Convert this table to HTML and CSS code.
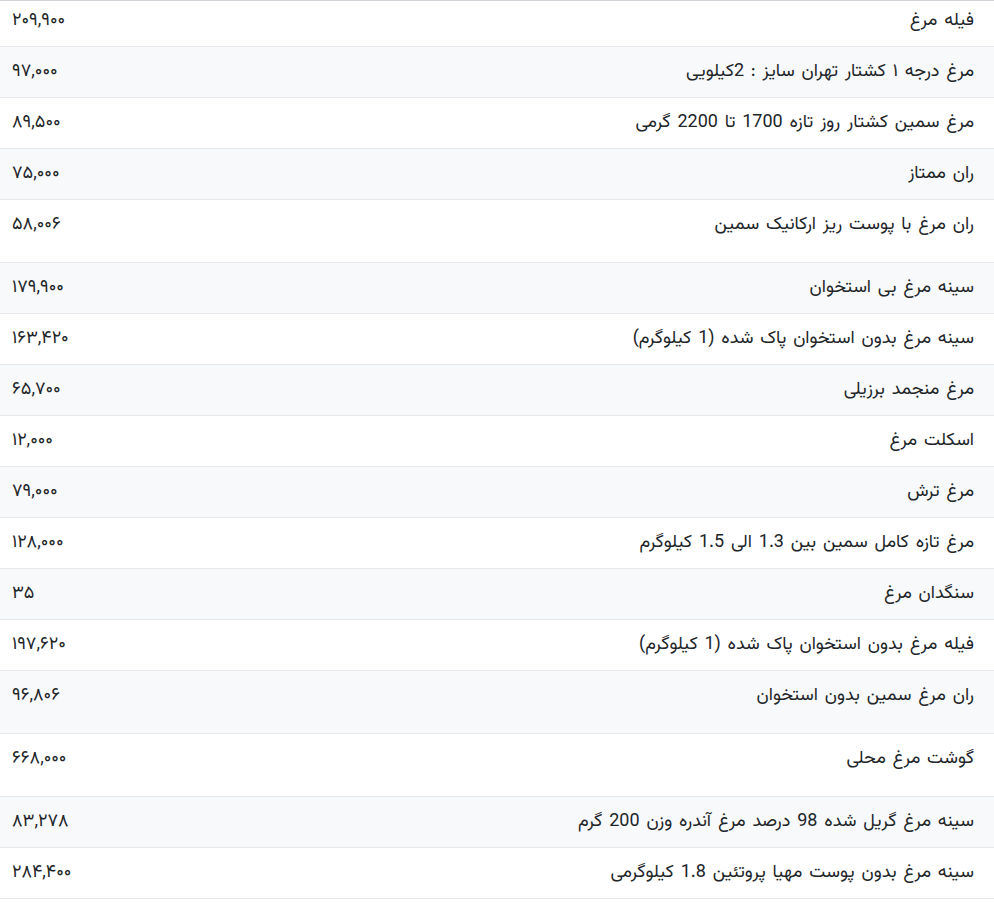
FILE: index.html
```html
<!DOCTYPE html>
<html lang="fa" dir="rtl">
<head>
<meta charset="utf-8">
<title>قیمت مرغ</title>
<link rel="stylesheet" href="styles.css">
</head>
<body>
<table class="prices">
  <tbody>
    <tr class="first"><td class="name">فیله مرغ</td><td class="price">۲۰۹,۹۰۰</td></tr>
    <tr><td class="name">مرغ درجه ۱ کشتار تهران سایز : 2کیلویی</td><td class="price">۹۷,۰۰۰</td></tr>
    <tr><td class="name">مرغ سمین کشتار روز تازه 1700 تا 2200 گرمی</td><td class="price">۸۹,۵۰۰</td></tr>
    <tr><td class="name">ران ممتاز</td><td class="price">۷۵,۰۰۰</td></tr>
    <tr class="tall"><td class="name">ران مرغ با پوست ریز ارکانیک سمین</td><td class="price">۵۸,۰۰۶</td></tr>
    <tr><td class="name">سینه مرغ بی استخوان</td><td class="price">۱۷۹,۹۰۰</td></tr>
    <tr><td class="name">سینه مرغ بدون استخوان پاک شده (1 کیلوگرم)</td><td class="price">۱۶۳,۴۲۰</td></tr>
    <tr><td class="name">مرغ منجمد برزیلی</td><td class="price">۶۵,۷۰۰</td></tr>
    <tr><td class="name">اسکلت مرغ</td><td class="price">۱۲,۰۰۰</td></tr>
    <tr><td class="name">مرغ ترش</td><td class="price">۷۹,۰۰۰</td></tr>
    <tr><td class="name">مرغ تازه کامل سمین بین 1.3 الی 1.5 کیلوگرم</td><td class="price">۱۲۸,۰۰۰</td></tr>
    <tr><td class="name">سنگدان مرغ</td><td class="price">۳۵</td></tr>
    <tr><td class="name">فیله مرغ بدون استخوان پاک شده (1 کیلوگرم)</td><td class="price">۱۹۷,۶۲۰</td></tr>
    <tr class="tall"><td class="name">ران مرغ سمین بدون استخوان</td><td class="price">۹۶,۸۰۶</td></tr>
    <tr class="tall"><td class="name">گوشت مرغ محلی</td><td class="price">۶۶۸,۰۰۰</td></tr>
    <tr><td class="name">سینه مرغ گریل شده 98 درصد مرغ آندره وزن 200 گرم</td><td class="price">۸۳,۲۷۸</td></tr>
    <tr><td class="name">سینه مرغ بدون پوست مهیا پروتئین 1.8 کیلوگرمی</td><td class="price">۲۸۴,۴۰۰</td></tr>
  </tbody>
</table>
</body>
</html>
```
FILE: styles.css
```css
html, body {
  margin: 0;
  padding: 0;
  background: #ffffff;
}

body {
  font-family: "Vazirmatn", Roboto, "DejaVu Sans", sans-serif;
  font-size: 18px;
  color: #212529;
}

.prices {
  width: 100%;
  border-collapse: collapse;
  border-top: 1px solid #cfd2d6;
}

.prices td {
  padding: 12px 0 12px 0;
  line-height: 26px;
  border-bottom: 1px solid #e6e8eb;
  vertical-align: top;
  white-space: nowrap;
}

.prices tr:nth-child(even) td {
  background: #f8f9fa;
}

.prices .name {
  text-align: right;
  padding-right: 20px;
  word-spacing: 2px;
}

.prices .price {
  text-align: left;
  padding-left: 12px;
  width: 1%;
}

.prices tr.first td {
  padding-top: 7px;
}

.prices tr.tall td {
  padding-bottom: 24px;
}
```
